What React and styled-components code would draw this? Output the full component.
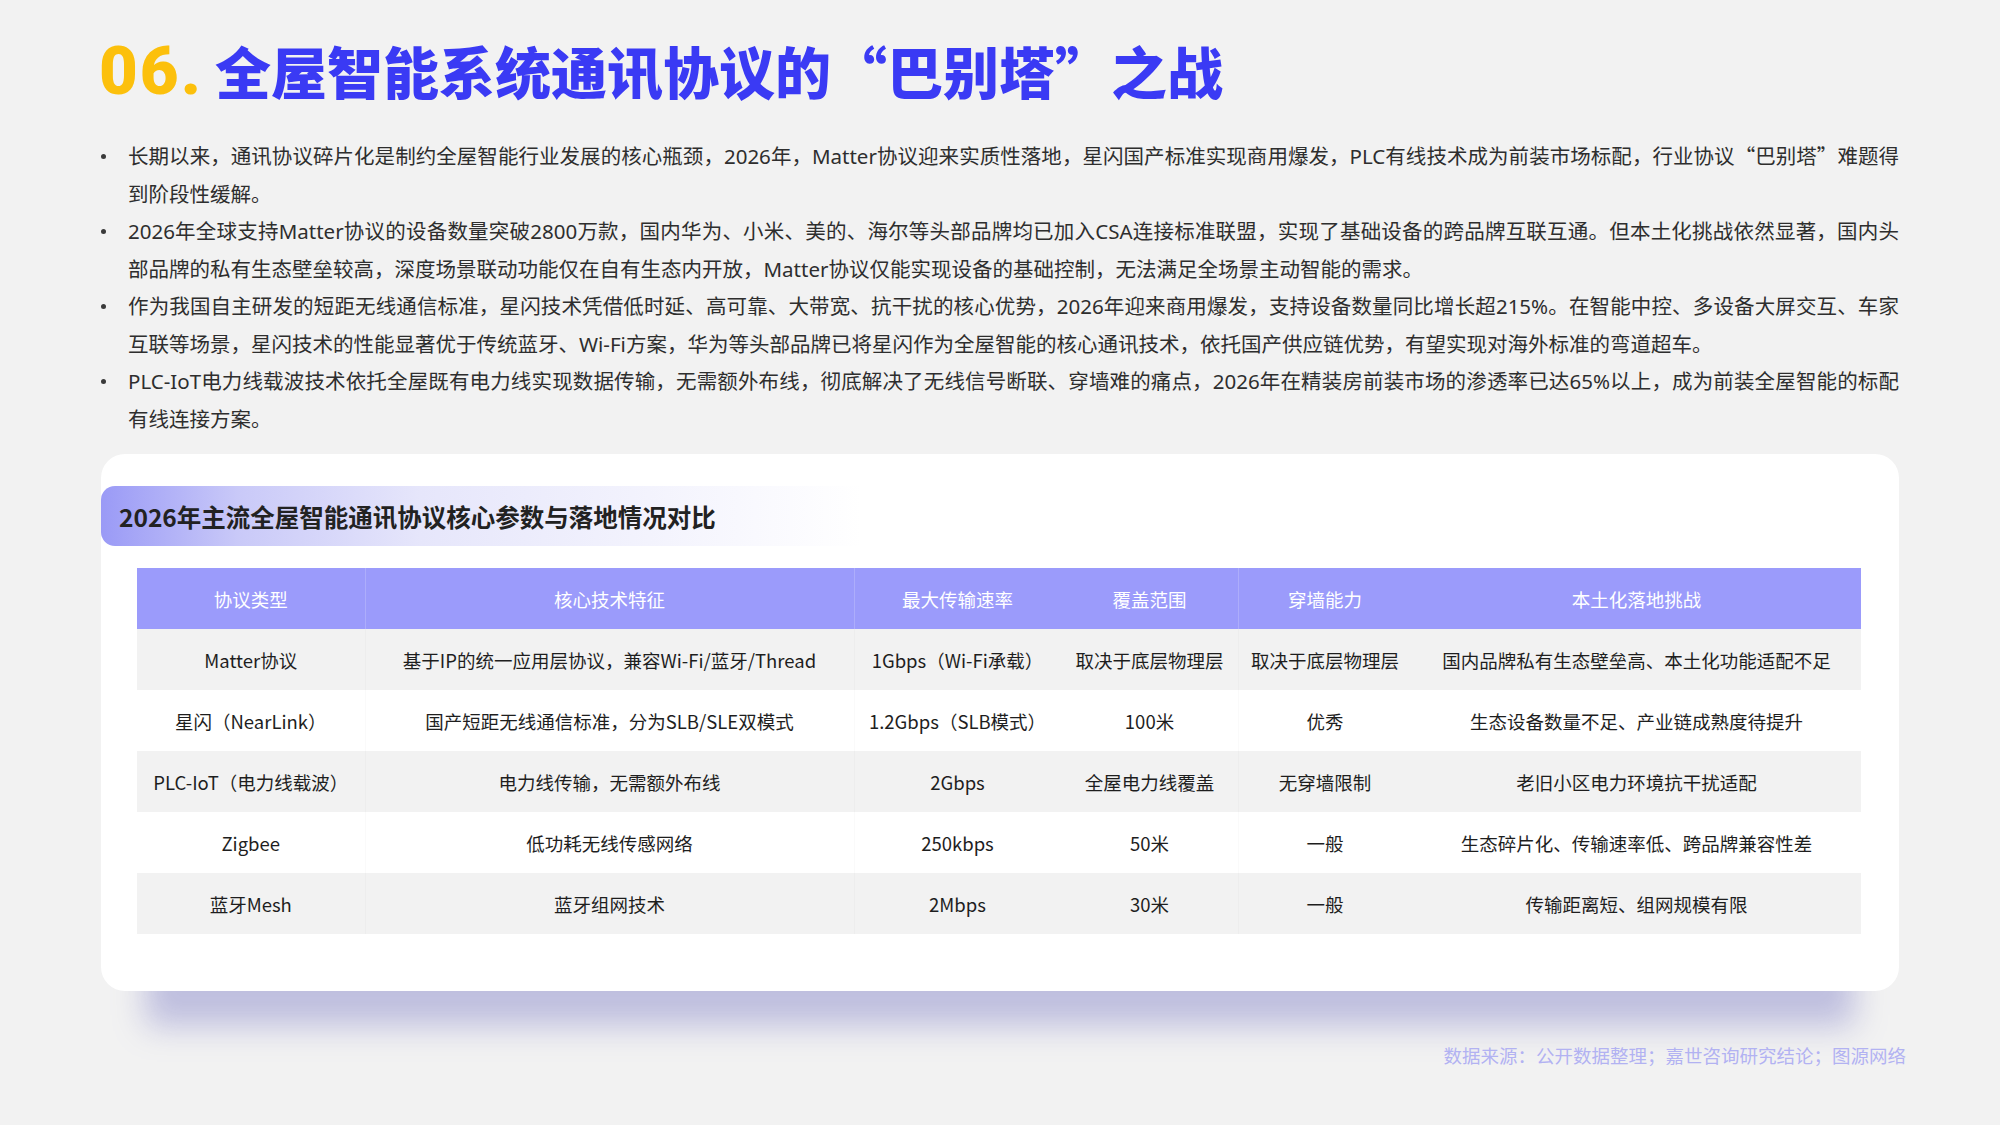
import React from 'react';
import styled, { createGlobalStyle } from 'styled-components';

const Quote = styled.span`
  font-family: "Noto Sans CJK SC", sans-serif;
  line-height: 1;
`;

const points = [
  <>
    长期以来，通讯协议碎片化是制约全屋智能行业发展的核心瓶颈，2026年，Matter协议迎来实质性落地，星闪国产标准实现商用爆发，PLC有线技术成为前装市场标配，行业协议<Quote>“巴别塔”</Quote>难题得到阶段性缓解。
  </>,
  '2026年全球支持Matter协议的设备数量突破2800万款，国内华为、小米、美的、海尔等头部品牌均已加入CSA连接标准联盟，实现了基础设备的跨品牌互联互通。但本土化挑战依然显著，国内头部品牌的私有生态壁垒较高，深度场景联动功能仅在自有生态内开放，Matter协议仅能实现设备的基础控制，无法满足全场景主动智能的需求。',
  '作为我国自主研发的短距无线通信标准，星闪技术凭借低时延、高可靠、大带宽、抗干扰的核心优势，2026年迎来商用爆发，支持设备数量同比增长超215%。在智能中控、多设备大屏交互、车家互联等场景，星闪技术的性能显著优于传统蓝牙、Wi-Fi方案，华为等头部品牌已将星闪作为全屋智能的核心通讯技术，依托国产供应链优势，有望实现对海外标准的弯道超车。',
  'PLC-IoT电力线载波技术依托全屋既有电力线实现数据传输，无需额外布线，彻底解决了无线信号断联、穿墙难的痛点，2026年在精装房前装市场的渗透率已达65%以上，成为前装全屋智能的标配有线连接方案。',
];

const columns = [
  { title: '协议类型', width: 228, divider: true },
  { title: '核心技术特征', width: 489, divider: true },
  { title: '最大传输速率', width: 207 },
  { title: '覆盖范围', width: 177, divider: true },
  { title: '穿墙能力', width: 174 },
  { title: '本土化落地挑战', width: 449 },
];

const rows = [
  ['Matter协议', '基于IP的统一应用层协议，兼容Wi-Fi/蓝牙/Thread', '1Gbps（Wi-Fi承载）', '取决于底层物理层', '取决于底层物理层', '国内品牌私有生态壁垒高、本土化功能适配不足'],
  ['星闪（NearLink）', '国产短距无线通信标准，分为SLB/SLE双模式', '1.2Gbps（SLB模式）', '100米', '优秀', '生态设备数量不足、产业链成熟度待提升'],
  ['PLC-IoT（电力线载波）', '电力线传输，无需额外布线', '2Gbps', '全屋电力线覆盖', '无穿墙限制', '老旧小区电力环境抗干扰适配'],
  ['Zigbee', '低功耗无线传感网络', '250kbps', '50米', '一般', '生态碎片化、传输速率低、跨品牌兼容性差'],
  ['蓝牙Mesh', '蓝牙组网技术', '2Mbps', '30米', '一般', '传输距离短、组网规模有限'],
];

function App() {
  return (
    <Page>
      <GlobalStyle />
      <Title>
        <TitleNumber>06.</TitleNumber>
        <TitleText>全屋智能系统通讯协议的“巴别塔”之战</TitleText>
      </Title>
      <Points>
        {points.map((text, i) => (
          <Point key={i}>
            <Dot />
            <PointText>{text}</PointText>
          </Point>
        ))}
      </Points>
      <Card>
        <CardHeading>2026年主流全屋智能通讯协议核心参数与落地情况对比</CardHeading>
        <Table>
          <colgroup>
            {columns.map((c) => (
              <col key={c.title} style={{ width: c.width }} />
            ))}
          </colgroup>
          <thead>
            <tr>
              {columns.map((c) => (
                <HeadCell key={c.title} $divider={c.divider}>
                  {c.title}
                </HeadCell>
              ))}
            </tr>
          </thead>
          <tbody>
            {rows.map((row, r) => (
              <Row key={r} $shaded={r % 2 === 0}>
                {row.map((cell, c) => (
                  <Cell key={c} $divider={columns[c].divider}>
                    {cell}
                  </Cell>
                ))}
              </Row>
            ))}
          </tbody>
        </Table>
      </Card>
      <Source>数据来源：公开数据整理；嘉世咨询研究结论；图源网络</Source>
    </Page>
  );
}

export default App;

const GlobalStyle = createGlobalStyle`
  html, body {
    margin: 0;
    padding: 0;
    background: #f2f2f2;
  }
  body {
    font-family: "Noto Sans CJK SC", "Noto Sans", sans-serif;
    color: #2b2b2b;
  }
`;

const Page = styled.div`
  width: 2000px;
  height: 1125px;
  box-sizing: border-box;
  padding: 30px 101px 0;
  overflow: hidden;
`;

const Title = styled.h1`
  display: flex;
  align-items: baseline;
  margin: 0;
  height: 80px;
  line-height: 80px;
`;

const TitleNumber = styled.span`
  font-family: Roboto, "Noto Sans", sans-serif;
  font-size: 67px;
  font-weight: 900;
  color: #fcc00c;
  margin: 0 12px 0 -2px;
  letter-spacing: 2px;
`;

const TitleText = styled.span`
  font-family: "Noto Sans CJK SC", sans-serif;
  font-size: 56px;
  font-weight: 900;
  color: #3a3af4;
`;

const Points = styled.ul`
  list-style: none;
  margin: 28px 0 0;
  padding: 0;
`;

const Point = styled.li`
  display: flex;
  align-items: flex-start;
`;

const Dot = styled.span`
  flex: none;
  width: 5px;
  height: 5px;
  border-radius: 50%;
  background: #3a3a3a;
  margin: 16px 22px 0 0;
`;

const PointText = styled.p`
  flex: 1;
  margin: 0;
  font-family: "Noto Sans", "Noto Sans CJK SC", sans-serif;
  font-size: 20.5px;
  line-height: 37.5px;
  color: #2e2e2e;
  text-align: justify;
`;

const Card = styled.section`
  margin-top: 16px;
  background: #ffffff;
  border-radius: 24px;
  padding: 32px 0 57px;
  box-shadow: 0 80px 30px -45px rgba(128, 128, 200, 0.45);
`;

const CardHeading = styled.h2`
  display: flex;
  align-items: center;
  width: 760px;
  height: 60px;
  margin: 0;
  padding-left: 18px;
  box-sizing: border-box;
  border-radius: 14px 0 0 14px;
  background: linear-gradient(90deg, #9a9af6 0%, #c9c9f8 18%, #e6e6fb 42%, #ffffff 100%);
  font-size: 24.5px;
  font-weight: 700;
  color: #222222;
`;

const Table = styled.table`
  width: 1724px;
  margin: 22px 36px 0;
  border-collapse: collapse;
  table-layout: fixed;
`;

const HeadCell = styled.th`
  height: 61px;
  padding: 0;
  background: #9b9bfb;
  color: #ffffff;
  font-size: 18.5px;
  font-weight: 400;
  text-align: center;
  border-right: 1px solid ${(p) => (p.$divider ? 'rgba(255, 255, 255, 0.18)' : 'transparent')};
`;

const Row = styled.tr`
  background: ${(p) => (p.$shaded ? '#f2f2f2' : '#ffffff')};
`;

const Cell = styled.td`
  height: 61px;
  padding: 0 4px;
  font-size: 18.5px;
  color: #1e1e1e;
  text-align: center;
  white-space: nowrap;
  border-right: 1px solid ${(p) => (p.$divider ? 'rgba(0, 0, 0, 0.02)' : 'transparent')};
`;

const Source = styled.div`
  margin: 51px -7px 0 0;
  text-align: right;
  font-size: 18.5px;
  line-height: 26px;
  color: #b2b2f2;
`;
